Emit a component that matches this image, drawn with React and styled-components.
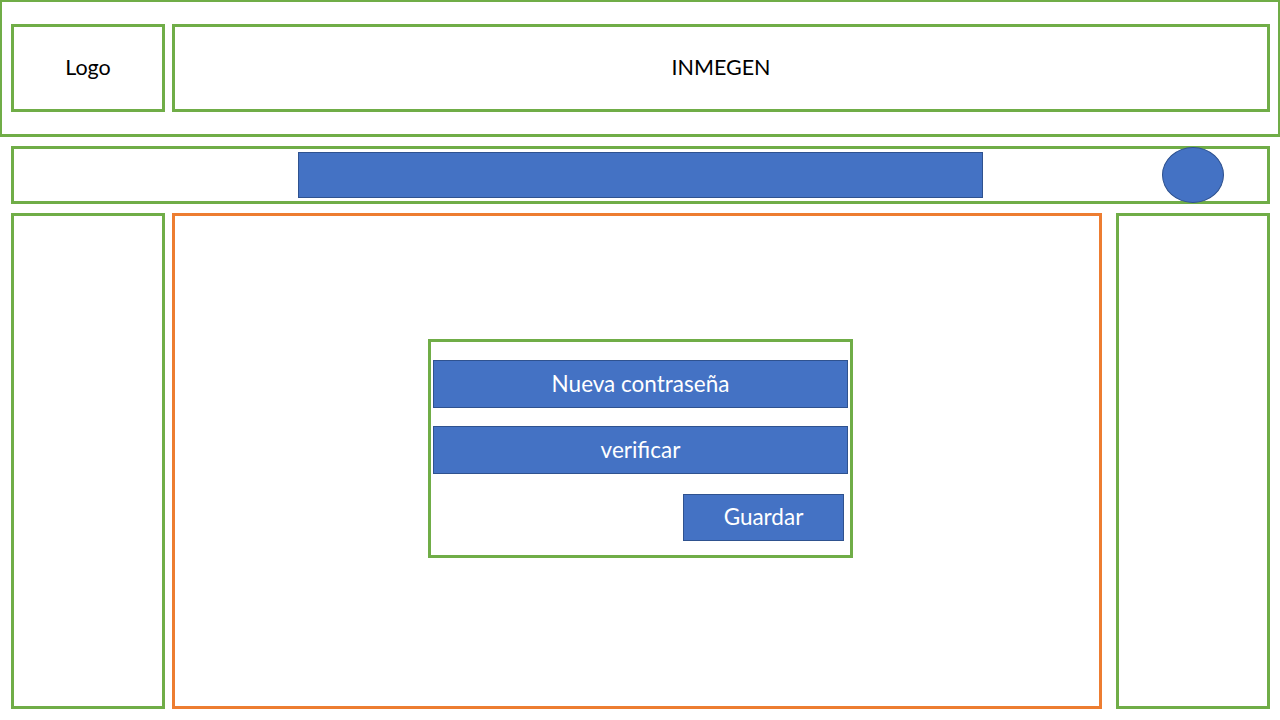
import React from "react";
import styled, { createGlobalStyle } from "styled-components";

const GREEN = "#70AD47";
const ORANGE = "#ED7D31";
const BLUE = "#4472C4";
const BLUE_EDGE = "#2F528F";

const Global = createGlobalStyle`
  html, body { margin: 0; padding: 0; background: #fff; }
  body { font-family: Lato, "Open Sans", sans-serif; width: 1280px; height: 720px; overflow: hidden; }
  * { box-sizing: border-box; }
`;

const Page = styled.div`
  width: 1280px;
  height: 720px;
  display: flex;
  flex-direction: column;
`;

const Header = styled.header`
  height: 137px;
  border: 2px solid ${GREEN};
  border-bottom-width: 3px;
  padding: 22px 8px 0 9px;
  display: flex;
  gap: 7px;
  align-items: flex-start;
`;

const Box = styled.div`
  border: 3px solid ${(p) => (p.$accent ? ORANGE : GREEN)};
  background: #fff;
`;

const LabelBox = styled(Box)`
  height: 88px;
  width: ${(p) => (p.$grow ? "auto" : "154px")};
  flex: ${(p) => (p.$grow ? "1" : "none")};
  display: flex;
  align-items: center;
  justify-content: center;
  font-size: 21.5px;
  line-height: 1;
  padding-bottom: 0;
  color: #000;
`;

const Nav = styled(Box)`
  margin: 9px 10px 0 11px;
  height: 58px;
  display: flex;
  align-items: center;
  padding-left: 284px;
  gap: 179px;
`;

const SearchBar = styled.div`
  width: 685px;
  height: 46px;
  background: ${BLUE};
  border: 1px solid ${BLUE_EDGE};
  flex: none;
`;

const Avatar = styled.div`
  width: 62px;
  height: 56px;
  border-radius: 50%;
  background: ${BLUE};
  border: 1px solid ${BLUE_EDGE};
  flex: none;
`;

const Body = styled.div`
  margin: 9px 10px 0 11px;
  height: 496px;
  display: flex;
`;

const Side = styled(Box)`
  width: 154px;
  flex: none;
`;

const Main = styled(Box)`
  width: 930px;
  flex: none;
  margin: 0 14px 0 7px;
  padding: 123px 0 0 253px;
`;

const Form = styled.div`
  width: 425px;
  height: 219px;
  border: 3px solid ${GREEN};
  padding: 18px 2px 0 2px;
  display: flex;
  flex-direction: column;
`;

const Field = styled.div`
  height: 48px;
  margin-bottom: ${(p) => p.$gap}px;
  background: ${BLUE};
  border: 1px solid ${BLUE_EDGE};
  color: #fff;
  font-size: 22.5px;
  line-height: 1;
  padding-bottom: 0;
  display: flex;
  align-items: center;
  justify-content: center;
`;

const SaveButton = styled.button`
  align-self: flex-end;
  margin-right: 4px;
  width: 161px;
  height: 47px;
  background: ${BLUE};
  border: 1px solid ${BLUE_EDGE};
  color: #fff;
  font-family: inherit;
  font-size: 22.5px;
  line-height: 1;
  padding: 0;
  cursor: pointer;
`;

export default function App() {
  return (
    <>
      <Global />
      <Page>
        <Header>
          <LabelBox>Logo</LabelBox>
          <LabelBox $grow>INMEGEN</LabelBox>
        </Header>
        <Nav>
          <SearchBar />
          <Avatar />
        </Nav>
        <Body>
          <Side />
          <Main $accent>
            <Form>
              <Field $gap={18}>Nueva contraseña</Field>
              <Field $gap={20}>verificar</Field>
              <SaveButton>Guardar</SaveButton>
            </Form>
          </Main>
          <Side />
        </Body>
      </Page>
    </>
  );
}
